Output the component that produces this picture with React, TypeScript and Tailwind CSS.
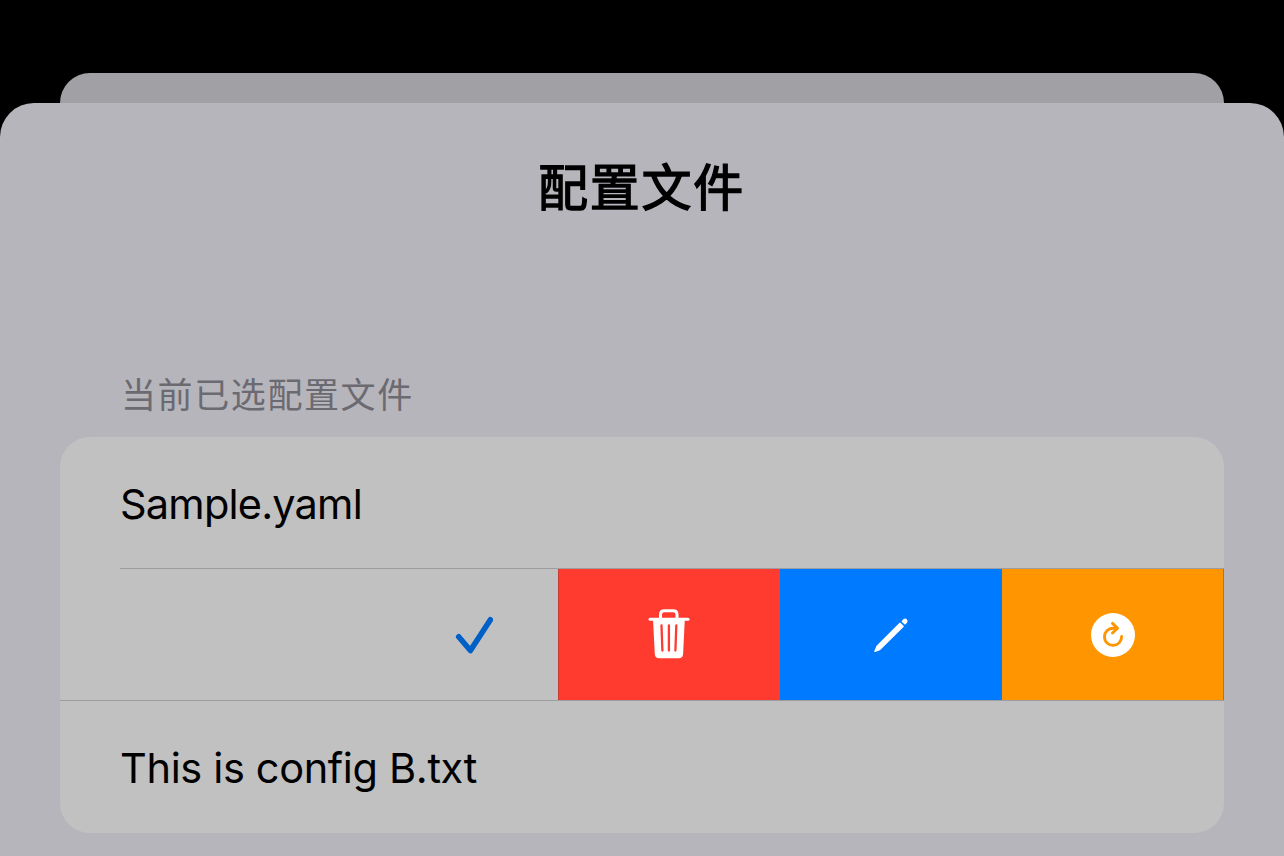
import React from "react";

function Check() {
  return (
    <svg className="h-[38px] w-[38px]" viewBox="0 0 38 38" fill="none">
      <path d="M3.700 20.800L15.400 34.500L35.400 3.800" stroke="#0060c8" strokeWidth="5.600" strokeLinecap="round" strokeLinejoin="round" />
    </svg>
  );
}

function Trash() {
  return (
    <svg className="mr-px h-[52px] w-[42px] overflow-visible" viewBox="0 0 42 52" fill="none">
      <path d="M2 10.300H40" stroke="white" strokeWidth="3" strokeLinecap="round" />
      <path d="M12.500 10V5.500Q12.500 1.700 16.300 1.700H25.200Q29 1.700 29 5.500V10" stroke="white" strokeWidth="3" />
      <path d="M5 10H36.800L35.100 45Q34.800 49.300 30.500 49.300H11.400Q7.100 49.300 6.800 45Z" fill="white" />
      <path d="M13.500 16.500L14.400 41.500M20.900 16.500V41.500M28.300 16.500L27.400 41.500" stroke="#ff3b30" strokeWidth="2.300" strokeLinecap="round" />
    </svg>
  );
}

function Pencil() {
  return (
    <svg className="h-[36px] w-[36px]" viewBox="0 0 36 36" fill="white">
      <path d="M26.300 5.900Q27 5.200 27.700 5.900L30.500 8.700Q31.200 9.400 30.500 10.100L7.500 32.800Q6.800 33.300 6.200 33.500L2.200 35Q.9 35.400 1.300 34.100L3 29.900Q3.300 29.100 3.800 28.600Z" />
      <path d="M28.900 4.900Q28.400 4.300 29 3.700L30.600 2.100Q32.100 .8 33.800 2.300Q35.400 4 34.100 5.600L32.600 7.200Q32 7.800 31.400 7.300Z" />
    </svg>
  );
}

function Refresh() {
  return (
    <svg className="h-[44px] w-[44px]" viewBox="0 0 44 44" fill="none">
      <circle cx="22" cy="22" r="22" fill="white" />
      <path d="M26 15.200H22A8.600 8.600 0 1 0 30.600 23.400" stroke="#ff9500" strokeWidth="2.900" strokeLinecap="round" />
      <path d="M21.500 10.400L26.500 15.200L21.500 20" stroke="#ff9500" strokeWidth="2.900" strokeLinecap="round" strokeLinejoin="round" />
    </svg>
  );
}

export default function App() {
  return (
    <main className="h-[856px] w-[1284px] overflow-hidden bg-black pt-[73px] font-[Inter,'Noto_Sans_CJK_SC',sans-serif] text-black">
      <div className="mx-[60px] h-[30px] rounded-t-[30px] bg-[#a1a0a5]" />
      <section className="h-[753px] rounded-t-[34px] bg-[#b6b5bb] px-[60px]">
        <h1 className="h-[262px] pt-[50px] pr-px text-center text-[50px] leading-[70px] tracking-[1.7px] [-webkit-text-stroke:1.4px_black]">配置文件</h1>
        <h2 className="h-[72px] pt-[5px] pl-[61px] text-[35px] leading-[50px] tracking-[1.6px] text-[#6b6a70]">当前已选配置文件</h2>
        <div className="h-[396px] overflow-hidden rounded-[30px] bg-[#c1c1c1]">
          <div className="flex h-[131px] items-center pl-[60px] text-[41.5px] tracking-[-0.8px]">
            <span className="pt-[3px]">Sample.yaml</span>
          </div>
          <div className="ml-[60px] h-px bg-[#9d9da0]" />
          <div className="flex h-[131px]">
            <div className="flex w-[498px] items-center justify-end pr-[65px]">
              <Check />
            </div>
            <button className="flex w-[222px] items-center justify-center border-l border-[#c93a34] bg-[#ff3b30]"><Trash /></button>
            <button className="flex w-[222px] items-center justify-center bg-[#007aff]"><Pencil /></button>
            <button className="flex w-[222px] items-center justify-center border-r border-[#b9741b] bg-[#ff9500]"><Refresh /></button>
          </div>
          <div className="h-px bg-[#9d9da0]" />
          <div className="flex h-[132px] items-center pl-[60px] text-[41.5px] tracking-[-0.35px]">
            <span className="pt-0.5">This is config B.txt</span>
          </div>
        </div>
      </section>
    </main>
  );
}
